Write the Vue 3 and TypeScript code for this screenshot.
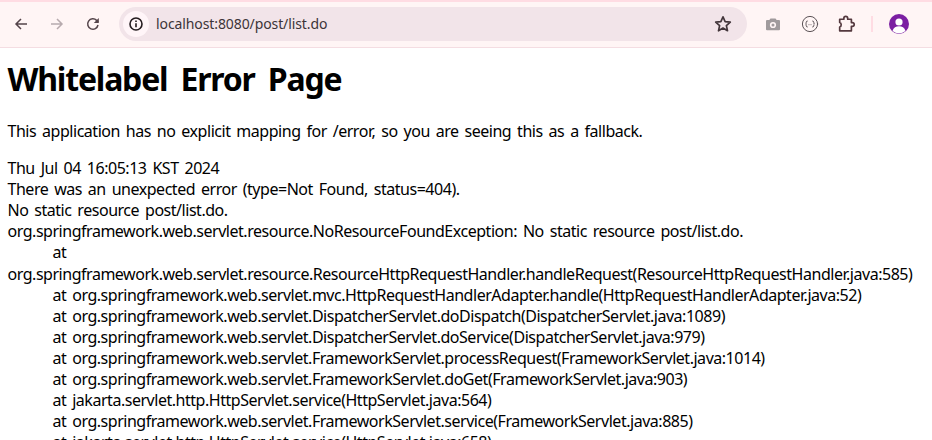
<script setup lang="ts">
const trace = `org.springframework.web.servlet.resource.NoResourceFoundException: No static resource post/list.do.
	at org.springframework.web.servlet.resource.ResourceHttpRequestHandler.handleRequest(ResourceHttpRequestHandler.java:585)
	at org.springframework.web.servlet.mvc.HttpRequestHandlerAdapter.handle(HttpRequestHandlerAdapter.java:52)
	at org.springframework.web.servlet.DispatcherServlet.doDispatch(DispatcherServlet.java:1089)
	at org.springframework.web.servlet.DispatcherServlet.doService(DispatcherServlet.java:979)
	at org.springframework.web.servlet.FrameworkServlet.processRequest(FrameworkServlet.java:1014)
	at org.springframework.web.servlet.FrameworkServlet.doGet(FrameworkServlet.java:903)
	at jakarta.servlet.http.HttpServlet.service(HttpServlet.java:564)
	at org.springframework.web.servlet.FrameworkServlet.service(FrameworkServlet.java:885)
	at jakarta.servlet.http.HttpServlet.service(HttpServlet.java:658)`
</script>

<template>
  <div class="window">
    <header class="toolbar">
      <div class="nav">
        <svg class="ico back" viewBox="0 0 16 16"><path d="M14 8H3M8 3 3 8l5 5" /></svg>
        <svg class="ico fwd" viewBox="0 0 16 16"><path d="M2 8h11M8 3l5 5-5 5" /></svg>
        <svg class="ico reload" viewBox="0 0 16 16"><path d="M13 9a5.2 5.2 0 1 1-1.4-4.6L13.2 6" /><path class="fill" d="M13.8 2v5h-5z" /></svg>
      </div>
      <div class="omnibox">
        <span class="info">
          <svg viewBox="0 0 16 16" width="16" height="16"><circle cx="8" cy="8" r="6" /><path d="M8 7.2v4M8 4.4v1.5" /></svg>
        </span>
        <span class="url">localhost:8080/post/list.do</span>
        <svg class="star" viewBox="0 0 16 16"><path d="M8 1.6l1.9 4.3 4.6.4-3.5 3.1 1 4.6L8 11.6 4 14l1-4.6L1.500 6.300l4.600-.4z" /></svg>
      </div>
      <div class="actions">
        <svg class="camera" viewBox="0 0 16 16"><path d="M5.500 2.500h5L11.700 4H14a1 1 0 0 1 1 1v8.200a1 1 0 0 1-1 1H2a1 1 0 0 1-1-1V5a1 1 0 0 1 1-1h2.300z" /><circle cx="8" cy="9" r="3.100" /><circle class="core" cx="8" cy="9" r="1.500" /></svg>
        <svg class="ext-round" viewBox="0 0 18 18"><circle cx="9" cy="9" r="7.600" /><path d="M6.300 6Q5.200 6 5.200 7.300v1L4.500 9l.7.700v1Q5.200 12 6.300 12M11.700 6q1.100 0 1.100 1.300v1l.7.700-.7.700v1Q12.800 12 11.700 12M8 9.700h.01M10 9.700h.01" /></svg>
        <svg class="puzzle" viewBox="0 0 16 16"><path d="M1.500 3.800h3.700V3a1.700 1.700 0 0 1 3.400 0v.8h3.300v2.900h.8a1.700 1.700 0 0 1 0 3.400h-.8v4H1.500v-3.400c1.800-.4 1.800-3.600 0-4z" /></svg>
        <span class="divider"></span>
        <span class="avatar">
          <svg viewBox="0 0 20 20" width="20" height="20"><circle cx="10" cy="10" r="10" class="bg" /><circle cx="10" cy="8" r="3.600" class="fg" /><path class="fg" d="M3.500 17c1-3.500 3.500-4.800 6.500-4.800s5.500 1.300 6.500 4.800a10 10 0 0 1-13 0z" /></svg>
        </span>
      </div>
    </header>
    <main class="page">
      <h1>Whitelabel Error Page</h1>
      <p>This application has no explicit mapping for /error, so you are seeing this as a fallback.</p>
      <div>Thu Jul 04 16:05:13 KST 2024</div>
      <div>There was an unexpected error (type=Not Found, status=404).</div>
      <div>No static resource post/list.do.</div>
      <div class="trace">{{ trace }}</div>
    </main>
  </div>
</template>

<style>
html, body { margin: 0; overflow: hidden; background: #fff; }
</style>

<style scoped>
.window { width: 932px; height: 440px; overflow: hidden; font-family: "Noto Sans", "Noto Sans CJK KR", sans-serif; color: #000; }
.toolbar { box-sizing: border-box; height: 48px; display: flex; align-items: center; background: #fff5f5; border-top: 2px solid #ffdce3; border-bottom: 1px solid #f4dde2; padding-bottom: 1px; }
.nav { display: flex; align-items: center; gap: 20px; padding-left: 13px; width: 119px; box-sizing: border-box; }
.ico { width: 16px; height: 16px; fill: none; stroke: #54444a; stroke-width: 1.5; }
.fwd { stroke: #b7aaae; }
.fill { fill: #54444a; stroke: none; }
.omnibox { width: 628px; height: 34px; border-radius: 17px; background: #f2e4e9; display: flex; align-items: center; padding: 0 15px 0 4px; box-sizing: border-box; }
.info { width: 26px; height: 26px; border-radius: 50%; background: #fff5f8; display: flex; align-items: center; justify-content: center; }
.info svg { fill: none; stroke: #241c1f; stroke-width: 1.600; }
.url { margin-left: 7px; flex: 1; font: 14px/20px "Noto Sans", sans-serif; color: #3c3438; letter-spacing: -.1px; }
.star { width: 18px; height: 18px; fill: none; stroke: #43363b; stroke-width: 1.500; stroke-linejoin: round; }
.actions { display: flex; align-items: center; padding-left: 18px; }
.camera { width: 16px; height: 16px; fill: #a09a9c; }
.camera circle { fill: #fff5f5; }
.camera .core { fill: #a09a9c; }
.ext-round { width: 18px; height: 18px; margin-left: 20px; fill: none; stroke: #5b5256; stroke-width: 1; stroke-linecap: round; }
.puzzle { width: 18px; height: 18px; margin-left: 19px; fill: none; stroke: #54393f; stroke-width: 1.500; stroke-linejoin: round; }
.divider { width: 2px; height: 16px; background: #ffdce3; margin-left: 15px; }
.avatar { margin-left: 16px; display: flex; }
.bg { fill: #7b1fa2; }
.fg { fill: #fff; }
.page { padding: 0 8px 0 7.5px; font-size: 16px; line-height: 21.1px; letter-spacing: -.47px; word-spacing: 2.2px; }
h1 { margin: 10px 0 0; font-size: 32px; line-height: 42px; font-weight: 700; letter-spacing: -1.2px; word-spacing: 6px; }
p { margin: 21px 0 16px; }
.trace { white-space: pre-wrap; tab-size: 45px; }
</style>
